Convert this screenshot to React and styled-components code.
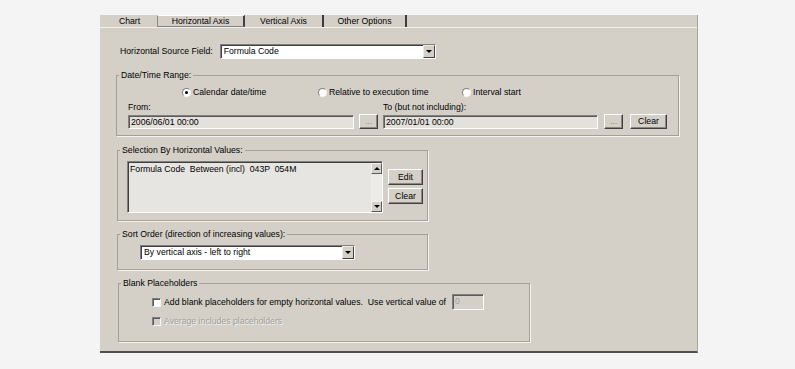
import React from "react";
import styled, { createGlobalStyle, css } from "styled-components";

const GlobalStyle = createGlobalStyle`
  html, body {
    margin: 0;
    padding: 0;
  }
  body {
    background: #f4f4f4;
    font-family: "Liberation Sans", Arial, sans-serif;
    font-size: 8.7px;
    color: #000;
  }
  * {
    box-sizing: border-box;
  }
`;

const Page = styled.div`
  width: 795px;
  height: 369px;
  padding: 15px 0 0 100px;
`;

const Panel = styled.div`
  width: 598px;
  height: 338px;
  background: #d4d0c8;
  border-right: 1px solid #a9a69f;
  border-bottom: 2px solid #505050;
  display: flex;
  flex-direction: column;
`;

const TabStrip = styled.div`
  display: flex;
  height: 13px;
  padding-left: 2px;
  border-bottom: 1px solid #f2f1ec;
`;

const Tab = styled.div`
  width: ${(p) => p.$w}px;
  display: flex;
  align-items: center;
  justify-content: center;
  padding-top: 1px;
  line-height: 11px;
  ${(p) =>
    p.$active &&
    css`
      border-top: 1px solid #fff;
      border-left: 1px solid #8a8780;
      border-right: 2px solid #404040;
      border-bottom: 1px solid #808080;
    `}
  ${(p) =>
    p.$sep &&
    css`
      border-right: 2px solid #3c3c3c;
    `}
`;

const Body = styled.div`
  padding: 16px 0 0 16px;
  display: flex;
  flex-direction: column;
  align-items: flex-start;
`;

const SourceRow = styled.div`
  display: flex;
  align-items: center;
  gap: 7px;
  padding-left: 4px;
  line-height: 15px;
`;

const Select = styled.div`
  width: ${(p) => p.$w}px;
  height: 15px;
  display: flex;
  background: #fff;
  border: 1px solid;
  border-color: #808080 #fff #fff #808080;
  box-shadow: inset 1px 1px 0 #404040;
`;

const SelectText = styled.div`
  flex: 1;
  padding: 1px 0 0 3px;
  line-height: 11px;
`;

const DropButton = styled.div`
  width: 12px;
  height: 100%;
  background: #d4d0c8;
  border: 1px solid;
  border-color: #ecebe6 #404040 #404040 #ecebe6;
  display: flex;
  align-items: center;
  justify-content: center;
`;

const Caret = styled.span`
  width: 0;
  height: 0;
  border-left: 3px solid transparent;
  border-right: 3px solid transparent;
  ${(p) =>
    p.$up
      ? css`
          border-bottom: 3px solid #000;
        `
      : css`
          border-top: 3px solid #000;
        `}
`;

const Group = styled.fieldset`
  margin: ${(p) => p.$mt}px 0 0 ${(p) => p.$ml || 0}px;
  padding: 0;
  width: ${(p) => p.$w}px;
  min-width: 0;
  border: 1px solid #a3a099;
  box-shadow: 1px 1px 0 #f4f3ef;
`;

const Legend = styled.legend`
  margin-left: 2px;
  padding: 0 2px;
  line-height: 11px;
`;

const GroupContent = styled.div`
  padding: ${(p) => p.$pad};
  display: flex;
  flex-direction: ${(p) => p.$dir || "column"};
  align-items: flex-start;
`;

const RadioRow = styled.div`
  display: flex;
  height: 11px;
  padding-left: 54px;
`;

const RadioItem = styled.label`
  width: ${(p) => p.$w}px;
  display: flex;
  align-items: center;
  gap: 2px;
  line-height: 11px;
`;

const Radio = styled.span`
  width: 9px;
  height: 9px;
  border-radius: 50%;
  background: #fff;
  border: 1px solid;
  border-color: #808080 #f4f4f4 #f4f4f4 #808080;
  display: flex;
  align-items: center;
  justify-content: center;
  &::after {
    content: "";
    width: 3px;
    height: 3px;
    border-radius: 50%;
    background: ${(p) => (p.$checked ? "#000" : "transparent")};
  }
`;

const DateRow = styled.div`
  display: flex;
  align-items: flex-end;
  margin-top: 4px;
`;

const FieldCol = styled.div`
  display: flex;
  flex-direction: column;
  margin-left: ${(p) => p.$ml || 0}px;
`;

const FieldLabel = styled.div`
  line-height: 11px;
  margin-bottom: 1px;
`;

const InputRow = styled.div`
  display: flex;
  align-items: center;
  gap: ${(p) => p.$gap}px;
`;

const TextBox = styled.div`
  width: ${(p) => p.$w}px;
  height: ${(p) => p.$h || 14}px;
  background: ${(p) => (p.$disabled ? "#d4d0c8" : "#e3e1dc")};
  color: ${(p) => (p.$disabled ? "#a09d96" : "#000")};
  border: 1px solid;
  border-color: #808080 #fff #fff #808080;
  box-shadow: inset 1px 1px 0 #5a5a5a;
  padding: 1px 0 0 2px;
  line-height: 11px;
`;

const Button = styled.div`
  width: ${(p) => p.$w}px;
  height: ${(p) => p.$h || 15}px;
  margin-left: ${(p) => p.$ml || 0}px;
  background: #d4d0c8;
  border: 1px solid;
  border-color: #fff #404040 #404040 #fff;
  box-shadow: inset -1px -1px 0 #8a8780;
  display: flex;
  align-items: center;
  justify-content: center;
  line-height: 11px;
  color: ${(p) => (p.$dim ? "#8a8780" : "#000")};
`;

const ListBox = styled.div`
  width: 256px;
  height: 52px;
  display: flex;
  background: #e6e5e1;
  border: 1px solid;
  border-color: #808080 #fff #fff #808080;
  box-shadow: inset 1px 1px 0 #404040;
  padding: 1px 0 0 1px;
`;

const ListText = styled.div`
  flex: 1;
  padding: 1px 0 1px 1px;
  line-height: 11px;
  white-space: pre;
`;

const ScrollBar = styled.div`
  width: 11px;
  display: flex;
  flex-direction: column;
  background: #edebe7;
`;

const ScrollButton = styled.div`
  width: 11px;
  height: 11px;
  background: #d4d0c8;
  border: 1px solid;
  border-color: #f4f4f4 #5a5a5a #5a5a5a #f4f4f4;
  display: flex;
  align-items: center;
  justify-content: center;
`;

const ScrollTrack = styled.div`
  flex: 1;
`;

const SideButtons = styled.div`
  display: flex;
  flex-direction: column;
  gap: 3px;
  margin: 8px 0 0 5px;
`;

const CheckRow = styled.div`
  display: flex;
  align-items: center;
  height: ${(p) => p.$h}px;
  margin-top: ${(p) => p.$mt || 0}px;
  line-height: 11px;
  white-space: pre;
`;

const CheckBox = styled.span`
  width: 9px;
  height: 9px;
  background: ${(p) => (p.$disabled ? "#d4d0c8" : "#fff")};
  border: 1px solid;
  border-color: #808080 #f4f4f4 #f4f4f4 #808080;
  box-shadow: inset 1px 1px 0 #5a5a5a;
  margin-right: 3px;
`;

const DimText = styled.span`
  color: #a09d96;
  text-shadow: 1px 1px 0 #f4f3ef;
`;

const InlineBox = styled(TextBox)`
  margin-left: 6px;
`;

const tabs = [
  { label: "Chart", w: 55 },
  { label: "Horizontal Axis", w: 88, active: true },
  { label: "Vertical Axis", w: 79, sep: true },
  { label: "Other Options", w: 83, sep: true },
];

export default function App() {
  return (
    <Page>
      <GlobalStyle />
      <Panel>
        <TabStrip>
          {tabs.map((t) => (
            <Tab key={t.label} $w={t.w} $active={t.active} $sep={t.sep}>
              {t.label}
            </Tab>
          ))}
        </TabStrip>

        <Body>
          <SourceRow>
            <span>Horizontal Source Field:</span>
            <Select $w={216}>
              <SelectText>Formula Code</SelectText>
              <DropButton>
                <Caret />
              </DropButton>
            </Select>
          </SourceRow>

          <Group $mt={11} $w={563}>
            <Legend>Date/Time Range:</Legend>
            <GroupContent $pad="6px 0 6px 11px">
              <RadioRow>
                <RadioItem $w={136}>
                  <Radio $checked />
                  Calendar date/time
                </RadioItem>
                <RadioItem $w={144}>
                  <Radio />
                  Relative to execution time
                </RadioItem>
                <RadioItem $w={80}>
                  <Radio />
                  Interval start
                </RadioItem>
              </RadioRow>
              <DateRow>
                <FieldCol>
                  <FieldLabel>From:</FieldLabel>
                  <InputRow $gap={5}>
                    <TextBox $w={226}>2006/06/01 00:00</TextBox>
                    <Button $w={19} $dim>...</Button>
                  </InputRow>
                </FieldCol>
                <FieldCol $ml={5}>
                  <FieldLabel>To (but not including):</FieldLabel>
                  <InputRow $gap={6}>
                    <TextBox $w={215}>2007/01/01 00:00</TextBox>
                    <Button $w={19} $dim>...</Button>
                  </InputRow>
                </FieldCol>
                <Button $w={37} $ml={7}>
                  Clear
                </Button>
              </DateRow>
            </GroupContent>
          </Group>

          <Group $mt={9} $ml={1} $w={311}>
            <Legend>Selection By Horizontal Values:</Legend>
            <GroupContent $pad="5px 0 7px 9px" $dir="row">
              <ListBox>
                <ListText>Formula Code  Between (incl)  043P  054M</ListText>
                <ScrollBar>
                  <ScrollButton>
                    <Caret $up />
                  </ScrollButton>
                  <ScrollTrack />
                  <ScrollButton>
                    <Caret />
                  </ScrollButton>
                </ScrollBar>
              </ListBox>
              <SideButtons>
                <Button $w={35} $h={16}>
                  Edit
                </Button>
                <Button $w={35} $h={16}>
                  Clear
                </Button>
              </SideButtons>
            </GroupContent>
          </Group>

          <Group $mt={8} $ml={1} $w={311}>
            <Legend>Sort Order (direction of increasing values):</Legend>
            <GroupContent $pad="5px 0 9px 22px">
              <Select $w={215}>
                <SelectText>By vertical axis - left to right</SelectText>
                <DropButton>
                  <Caret />
                </DropButton>
              </Select>
            </GroupContent>
          </Group>

          <Group $mt={8} $ml={2} $w={412}>
            <Legend>Blank Placeholders</Legend>
            <GroupContent $pad="5px 0 14px 33px">
              <CheckRow $h={16}>
                <CheckBox />
                Add blank placeholders for empty horizontal values.  Use vertical value of
                <InlineBox $w={32} $h={16} $disabled>
                  0
                </InlineBox>
              </CheckRow>
              <CheckRow $h={11} $mt={6}>
                <CheckBox $disabled />
                <DimText>Average includes placeholders</DimText>
              </CheckRow>
            </GroupContent>
          </Group>
        </Body>
      </Panel>
    </Page>
  );
}
